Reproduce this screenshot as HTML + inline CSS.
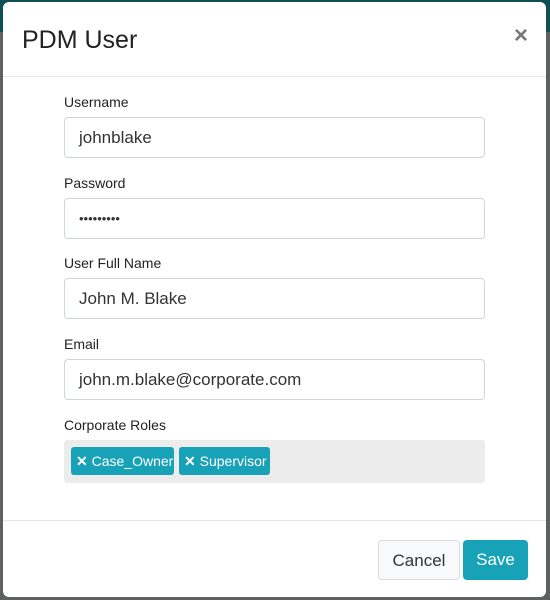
<!DOCTYPE html>
<html><head><style>
body{margin:0;width:550px;height:600px;background:#5f6060;position:relative;overflow:hidden;font-family:"Liberation Sans",sans-serif;}
.top{position:absolute;left:0;top:0;width:550px;height:32px;background:#0f4f55;}
.modal{position:absolute;left:3px;top:2px;width:543px;height:595px;background:#fff;border-radius:6px;}
.title{position:absolute;left:19px;top:24px;font-size:25px;color:#222;}
.close{position:absolute;left:511px;top:20px;font-size:24px;color:#777;font-weight:bold;}
.hr{position:absolute;left:0;width:543px;height:1px;background:#e6e6e6;}
.lbl{position:absolute;left:61px;font-size:14px;color:#222;}
.inp{position:absolute;left:61px;height:39px;border:1px solid #ced4da;border-radius:4px;box-sizing:content-box;font-size:17px;color:#333;line-height:39px;padding-left:14px;width:405px;}
.roles{position:absolute;left:61px;top:438px;width:421px;height:43px;background:#ececec;border-radius:3px;}
.tag{position:absolute;top:7px;height:28px;background:#17a2b8;color:#fff;border-radius:3px;font-size:14px;line-height:28px;box-sizing:border-box;padding-left:5px;white-space:nowrap;overflow:hidden;}
.btn{position:absolute;top:538px;height:40px;border-radius:4px;font-size:17px;line-height:40px;text-align:center;box-sizing:border-box;}
</style></head><body>
<div class="top"></div>
<div class="modal">
<div class="title">PDM User</div>
<div class="close">×</div>
<div class="hr" style="top:74px"></div>
<div class="lbl" style="top:92px">Username</div>
<div class="inp" style="top:115px">johnblake</div>
<div class="lbl" style="top:173px">Password</div>
<div class="inp" style="top:196px;font-size:13px">•••••••••</div>
<div class="lbl" style="top:253px">User Full Name</div>
<div class="inp" style="top:276px">John M. Blake</div>
<div class="lbl" style="top:334px">Email</div>
<div class="inp" style="top:357px">john.m.blake@corporate.com</div>
<div class="lbl" style="top:415px">Corporate Roles</div>
<div class="roles">
<div class="tag" style="left:7px;width:103px"><b>✕</b> Case_Owner</div>
<div class="tag" style="left:115px;width:91px"><b>✕</b> Supervisor</div>
</div>
<div class="hr" style="top:518px"></div>
<div class="btn" style="left:375px;width:82px;background:#f8f9fa;border:1px solid #ddd;color:#333">Cancel</div>
<div class="btn" style="left:460px;width:65px;background:#17a2b8;color:#fff">Save</div>
</div>
</body></html>
